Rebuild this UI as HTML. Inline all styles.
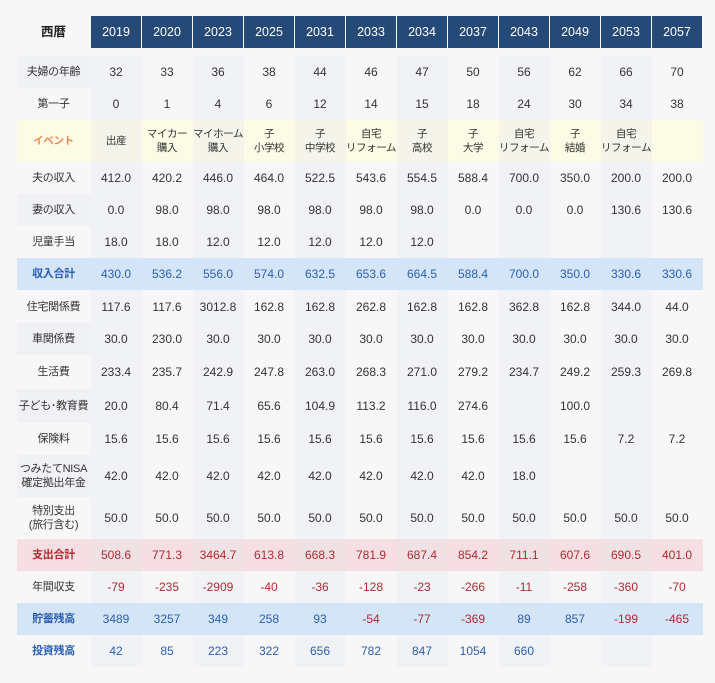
<!DOCTYPE html>
<html><head><meta charset="utf-8"><style>
html,body{margin:0;padding:0;background:#f7f7f7;width:715px;height:683px;overflow:hidden}
body{font-family:"Liberation Sans","Noto Sans CJK JP",sans-serif;color:#333;font-size:12px}
table{position:absolute;left:16px;top:15px;border-collapse:collapse;table-layout:fixed}
td,th{padding:0;text-align:center;vertical-align:middle;line-height:14px;white-space:nowrap}
th{font-weight:normal;color:#fff;background:#264a78;border:1px solid #f7f7f7;height:31px;font-size:12.5px}
th.l{background:transparent;color:#222;font-weight:bold}
tr.sp td{height:7px;background:transparent !important}
tr:nth-child(2n+1) td.l{background:#f0f1f4}
td.l{font-size:11px;color:#333;letter-spacing:-0.3px}
td.d:nth-child(2n){background:#f1f2f5}
tr.ev td{background:#fcfce6}
tr.ev td.d:nth-child(2n){background:#f4f4ea}
tr.ev td.l{color:#f5884f;font-weight:bold;background:#fcfce6}
tr.ev td{font-size:10.5px;letter-spacing:-0.4px}
tr.inc td{background:#d5e5f8 !important;color:#2a5fb5}
tr.inc td.l{font-weight:bold}
tr.exp td{background:#f6dfe3 !important;color:#b02a30}
tr.exp td.d:nth-child(2n){background:#f0e1e5 !important}
tr.exp td.l{font-weight:bold}
.r{color:#b02a30}
.b{color:#2a5fb5}
tr.inv td.l{color:#2a5fb5;font-weight:bold}
</style></head><body>
<table>
<colgroup><col style="width:74px"><col span="12" style="width:51px"></colgroup>
<tr style="height:33px"><th class="l">西暦</th><th>2019</th><th>2020</th><th>2023</th><th>2025</th><th>2031</th><th>2033</th><th>2034</th><th>2037</th><th>2043</th><th>2049</th><th>2053</th><th>2057</th></tr>
<tr class="sp"><td></td><td></td><td></td><td></td><td></td><td></td><td></td><td></td><td></td><td></td><td></td><td></td><td></td></tr>
<tr style="height:32px"><td class="l">夫婦の年齢</td><td class="d">32</td><td class="d">33</td><td class="d">36</td><td class="d">38</td><td class="d">44</td><td class="d">46</td><td class="d">47</td><td class="d">50</td><td class="d">56</td><td class="d">62</td><td class="d">66</td><td class="d">70</td></tr>
<tr style="height:32px"><td class="l">第一子</td><td class="d">0</td><td class="d">1</td><td class="d">4</td><td class="d">6</td><td class="d">12</td><td class="d">14</td><td class="d">15</td><td class="d">18</td><td class="d">24</td><td class="d">30</td><td class="d">34</td><td class="d">38</td></tr>
<tr class="ev" style="height:42px"><td class="l">イベント</td><td class="d">出産</td><td class="d">マイカー<br>購入</td><td class="d">マイホーム<br>購入</td><td class="d">子<br>小学校</td><td class="d">子<br>中学校</td><td class="d">自宅<br>リフォーム</td><td class="d">子<br>高校</td><td class="d">子<br>大学</td><td class="d">自宅<br>リフォーム</td><td class="d">子<br>結婚</td><td class="d">自宅<br>リフォーム</td><td class="d"></td></tr>
<tr style="height:32px"><td class="l">夫の収入</td><td class="d">412.0</td><td class="d">420.2</td><td class="d">446.0</td><td class="d">464.0</td><td class="d">522.5</td><td class="d">543.6</td><td class="d">554.5</td><td class="d">588.4</td><td class="d">700.0</td><td class="d">350.0</td><td class="d">200.0</td><td class="d">200.0</td></tr>
<tr style="height:32px"><td class="l">妻の収入</td><td class="d">0.0</td><td class="d">98.0</td><td class="d">98.0</td><td class="d">98.0</td><td class="d">98.0</td><td class="d">98.0</td><td class="d">98.0</td><td class="d">0.0</td><td class="d">0.0</td><td class="d">0.0</td><td class="d">130.6</td><td class="d">130.6</td></tr>
<tr style="height:32px"><td class="l">児童手当</td><td class="d">18.0</td><td class="d">18.0</td><td class="d">12.0</td><td class="d">12.0</td><td class="d">12.0</td><td class="d">12.0</td><td class="d">12.0</td><td class="d"></td><td class="d"></td><td class="d"></td><td class="d"></td><td class="d"></td></tr>
<tr class="inc" style="height:32px"><td class="l">収入合計</td><td class="d">430.0</td><td class="d">536.2</td><td class="d">556.0</td><td class="d">574.0</td><td class="d">632.5</td><td class="d">653.6</td><td class="d">664.5</td><td class="d">588.4</td><td class="d">700.0</td><td class="d">350.0</td><td class="d">330.6</td><td class="d">330.6</td></tr>
<tr style="height:33px"><td class="l">住宅関係費</td><td class="d">117.6</td><td class="d">117.6</td><td class="d">3012.8</td><td class="d">162.8</td><td class="d">162.8</td><td class="d">262.8</td><td class="d">162.8</td><td class="d">162.8</td><td class="d">362.8</td><td class="d">162.8</td><td class="d">344.0</td><td class="d">44.0</td></tr>
<tr style="height:32px"><td class="l">車関係費</td><td class="d">30.0</td><td class="d">230.0</td><td class="d">30.0</td><td class="d">30.0</td><td class="d">30.0</td><td class="d">30.0</td><td class="d">30.0</td><td class="d">30.0</td><td class="d">30.0</td><td class="d">30.0</td><td class="d">30.0</td><td class="d">30.0</td></tr>
<tr style="height:34px"><td class="l">生活費</td><td class="d">233.4</td><td class="d">235.7</td><td class="d">242.9</td><td class="d">247.8</td><td class="d">263.0</td><td class="d">268.3</td><td class="d">271.0</td><td class="d">279.2</td><td class="d">234.7</td><td class="d">249.2</td><td class="d">259.3</td><td class="d">269.8</td></tr>
<tr style="height:34px"><td class="l">子ども･教育費</td><td class="d">20.0</td><td class="d">80.4</td><td class="d">71.4</td><td class="d">65.6</td><td class="d">104.9</td><td class="d">113.2</td><td class="d">116.0</td><td class="d">274.6</td><td class="d"></td><td class="d">100.0</td><td class="d"></td><td class="d"></td></tr>
<tr style="height:32px"><td class="l">保険料</td><td class="d">15.6</td><td class="d">15.6</td><td class="d">15.6</td><td class="d">15.6</td><td class="d">15.6</td><td class="d">15.6</td><td class="d">15.6</td><td class="d">15.6</td><td class="d">15.6</td><td class="d">15.6</td><td class="d">7.2</td><td class="d">7.2</td></tr>
<tr style="height:42px"><td class="l">つみたてNISA<br>確定拠出年金</td><td class="d">42.0</td><td class="d">42.0</td><td class="d">42.0</td><td class="d">42.0</td><td class="d">42.0</td><td class="d">42.0</td><td class="d">42.0</td><td class="d">42.0</td><td class="d">18.0</td><td class="d"></td><td class="d"></td><td class="d"></td></tr>
<tr style="height:42px"><td class="l">特別支出<br>(旅行含む)</td><td class="d">50.0</td><td class="d">50.0</td><td class="d">50.0</td><td class="d">50.0</td><td class="d">50.0</td><td class="d">50.0</td><td class="d">50.0</td><td class="d">50.0</td><td class="d">50.0</td><td class="d">50.0</td><td class="d">50.0</td><td class="d">50.0</td></tr>
<tr class="exp" style="height:32px"><td class="l">支出合計</td><td class="d">508.6</td><td class="d">771.3</td><td class="d">3464.7</td><td class="d">613.8</td><td class="d">668.3</td><td class="d">781.9</td><td class="d">687.4</td><td class="d">854.2</td><td class="d">711.1</td><td class="d">607.6</td><td class="d">690.5</td><td class="d">401.0</td></tr>
<tr style="height:32px"><td class="l">年間収支</td><td class="d r">-79</td><td class="d r">-235</td><td class="d r">-2909</td><td class="d r">-40</td><td class="d r">-36</td><td class="d r">-128</td><td class="d r">-23</td><td class="d r">-266</td><td class="d r">-11</td><td class="d r">-258</td><td class="d r">-360</td><td class="d r">-70</td></tr>
<tr class="inc" style="height:32px"><td class="l">貯蓄残高</td><td class="d">3489</td><td class="d">3257</td><td class="d">349</td><td class="d">258</td><td class="d">93</td><td class="d" style="color:#b02a30">-54</td><td class="d" style="color:#b02a30">-77</td><td class="d" style="color:#b02a30">-369</td><td class="d">89</td><td class="d">857</td><td class="d" style="color:#b02a30">-199</td><td class="d" style="color:#b02a30">-465</td></tr>
<tr class="inv" style="height:32px"><td class="l">投資残高</td><td class="d b">42</td><td class="d b">85</td><td class="d b">223</td><td class="d b">322</td><td class="d b">656</td><td class="d b">782</td><td class="d b">847</td><td class="d b">1054</td><td class="d b">660</td><td class="d"></td><td class="d"></td><td class="d"></td></tr>
</table>
</body></html>
